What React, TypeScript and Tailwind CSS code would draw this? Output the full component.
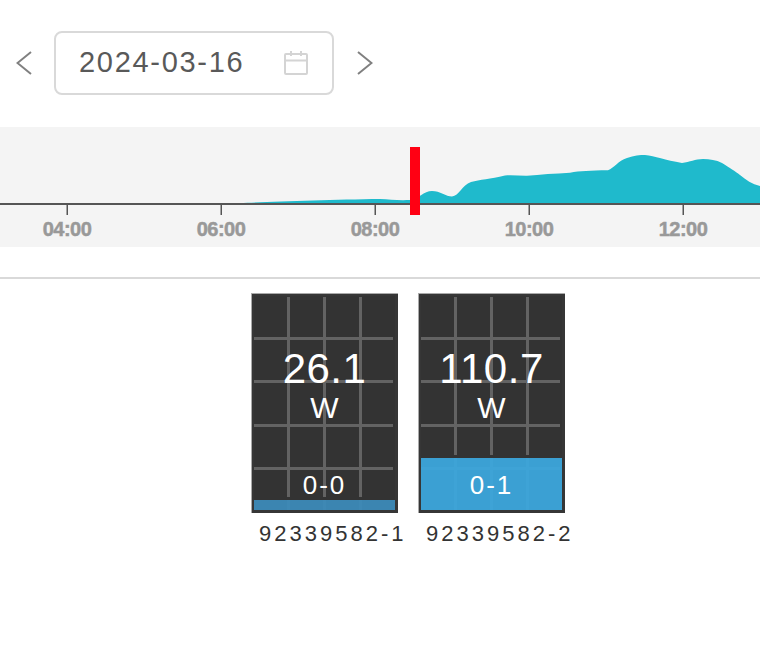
const font = "font-['Liberation_Sans',Arial,sans-serif]";

const ticks = [
  { x: 67, label: "04:00" },
  { x: 221, label: "06:00" },
  { x: 375, label: "08:00" },
  { x: 529, label: "10:00" },
  { x: 683, label: "12:00" },
];

// traced from the power curve, y is relative to the top of the chart band
const area =
  "M240 76 C270 75 330 72.500 380 72 C390 72.500 397 73.500 410 73 C418 72 424 64 432 64 C440 64 446 69.500 452 69.500 C459 69 462 58 471 55 C480 52.500 490 52 505 48.500 C512 48 520 48.800 527 48.700 C540 47.500 555 46.500 570 45.700 C580 44 590 43.500 608 43.300 C614 41 618 34 627 31 C634 28.500 640 28 645 28 C655 29 665 33 682 36 C690 35 695 32 703 32 C710 32 716 33 722 36 C730 41 735 44 740 48 C746 53 752 57 760 59 L760 77 L240 77 Z";

function Chevron({ points }: { points: string }) {
  return (
    <svg width="16" height="24" viewBox="0 0 16 24" fill="none" stroke="#808080" strokeWidth="2">
      <polyline points={points} />
    </svg>
  );
}

function DatePicker() {
  return (
    <div className="flex items-center pt-[31px]">
      <div className="ml-[16px]">
        <Chevron points="15,1 1.500,12 15,23" />
      </div>
      <div className="ml-[22px] flex h-[64px] w-[280px] items-center justify-between rounded-[8px] border-2 border-[#d9d9d9] pl-[23px] pr-[23px]">
        <span className="text-[29px] tracking-[1.700px] text-[#595959]">2024-03-16</span>
        <svg width="26" height="26" viewBox="0 0 26 26" fill="none" stroke="#d4d4d4" strokeWidth="2">
          <rect x="2" y="4" width="22" height="20" rx="1" />
          <path d="M2 10.500H24M8 1V6M18 1V6" />
        </svg>
      </div>
      <div className="ml-[23px]">
        <Chevron points="1,1 14.500,12 1,23" />
      </div>
    </div>
  );
}

function Timeline() {
  return (
    <div className="mt-[32px] h-[120px] bg-[#f4f4f4]">
      <svg width="760" height="120" viewBox="0 0 760 120">
        <path d={area} fill="#1fbacc" />
        <rect x="0" y="76" width="760" height="2" fill="#555555" />
        {ticks.map((t) => (
          <g key={t.label}>
            <rect x={t.x - 0.5} y="77" width="1.500" height="11" fill="#555555" />
            <text
              x={t.x}
              y="109"
              textAnchor="middle"
              fontSize="20"
              fontWeight="700"
              letterSpacing="-0.500"
              fill="#999999"
              stroke="#999999"
              strokeWidth="0.500"
              fontFamily="Liberation Sans, Arial, sans-serif"
            >
              {t.label}
            </text>
          </g>
        ))}
        <rect x="410" y="20" width="10" height="68" fill="#ff0013" />
      </svg>
    </div>
  );
}

function Tile({
  value,
  slot,
  name,
  fill,
  fillClass,
}: {
  value: string;
  slot: string;
  name: string;
  fill: number;
  fillClass: string;
}) {
  return (
    <div className="flex w-[147px] flex-col">
      <div className="relative h-[220px] border-[3px] border-[#363636] bg-[#333333]">
        {/* soft light edge along the top and left */}
        <div className="absolute -inset-[3px] border-t border-l border-[#aaaaaa]" />
        {/* grid lines */}
        <div className="absolute inset-x-0 top-[1px] flex h-[213px] justify-between px-[33px]">
          <div className="w-[3px] bg-[#636363]" />
          <div className="w-[3px] bg-[#636363]" />
          <div className="w-[3px] bg-[#636363]" />
        </div>
        <div className="absolute inset-x-0 top-[41px] flex h-[133px] flex-col justify-between pr-[2px]">
          <div className="h-[3px] bg-[#636363]" />
          <div className="h-[3px] bg-[#636363]" />
          <div className="h-[3px] bg-[#636363]" />
          <div className="h-[3px] bg-[#636363]" />
        </div>
        {/* level bar sits over the grid, the lines show through faintly */}
        <div
          className={`absolute inset-x-0 bottom-0 shadow-[0_-3px_0_#333333] ${fillClass}`}
          style={{ height: fill }}
        />
        <div className="relative flex h-full flex-col items-center text-white">
          <span className="mt-[50px] text-[42px] leading-[46px] tracking-[0.500px]">{value}</span>
          <span className="mt-[-1px] text-[30px] leading-[34px]">W</span>
          <span className="mt-[45px] text-[26px] leading-[30px] tracking-[2px]">{slot}</span>
        </div>
      </div>
      <span className="mt-[8px] ml-[8px] whitespace-nowrap text-[22px] leading-[26px] tracking-[3px] text-[#333333]">
        {name}
      </span>
    </div>
  );
}

export default function App() {
  return (
    <div className={`h-[672px] w-[760px] overflow-hidden bg-white ${font}`}>
      <DatePicker />
      <Timeline />
      <div className="mt-[30px] h-[2px] bg-[#d9d9d9]" />
      <div className="mt-[14px] flex gap-[20px] pl-[251px]">
        <Tile value="26.1" slot="0-0" name="92339582-1" fill={10} fillClass="bg-[#3c8ab8]/95" />
        <Tile value="110.7" slot="0-1" name="92339582-2" fill={52} fillClass="bg-[#3ca6dc]/95" />
      </div>
    </div>
  );
}
